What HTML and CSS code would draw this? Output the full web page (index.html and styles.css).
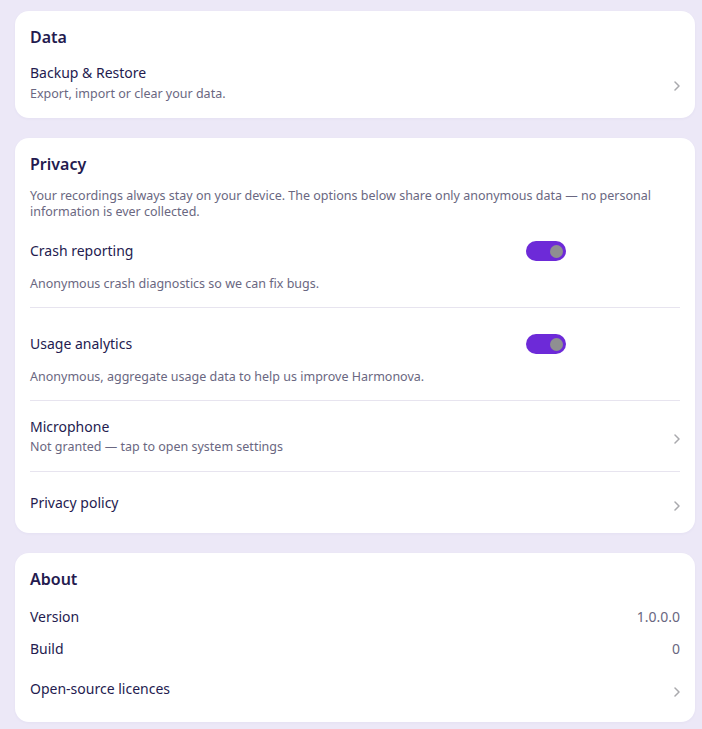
FILE: index.html
```html
<!DOCTYPE html>
<html lang="en">
<head>
<meta charset="utf-8">
<title>Settings</title>
<link rel="stylesheet" href="styles.css">
</head>
<body>
<main class="page">
  <section class="card">
    <h2 class="card-title">Data</h2>
    <div class="nav-item top">
      <div class="text">
        <div class="label">Backup &amp; Restore</div>
        <div class="sub">Export, import or clear your data.</div>
      </div>
      <svg class="chev" width="6" height="10" viewBox="0 0 6 10"><polyline points="1,1 5,5 1,9" fill="none" stroke="#a9a9ad" stroke-width="1.5" stroke-linecap="round" stroke-linejoin="round"/></svg>
    </div>
  </section>

  <section class="card">
    <h2 class="card-title">Privacy</h2>
    <p class="desc">Your recordings always stay on your device. The options below share only anonymous data — no personal information is ever collected.</p>
    <div class="toggle-item first">
      <div class="toggle-row">
        <div class="label">Crash reporting</div>
        <div class="switch"><span class="knob"></span></div>
      </div>
      <div class="sub">Anonymous crash diagnostics so we can fix bugs.</div>
    </div>
    <div class="toggle-item">
      <div class="toggle-row">
        <div class="label">Usage analytics</div>
        <div class="switch"><span class="knob"></span></div>
      </div>
      <div class="sub">Anonymous, aggregate usage data to help us improve Harmonova.</div>
    </div>
    <div class="nav-item divided">
      <div class="text">
        <div class="label">Microphone</div>
        <div class="sub">Not granted — tap to open system settings</div>
      </div>
      <svg class="chev" width="6" height="10" viewBox="0 0 6 10"><polyline points="1,1 5,5 1,9" fill="none" stroke="#a9a9ad" stroke-width="1.5" stroke-linecap="round" stroke-linejoin="round"/></svg>
    </div>
    <div class="nav-item single">
      <div class="text">
        <div class="label">Privacy policy</div>
      </div>
      <svg class="chev" width="6" height="10" viewBox="0 0 6 10"><polyline points="1,1 5,5 1,9" fill="none" stroke="#a9a9ad" stroke-width="1.5" stroke-linecap="round" stroke-linejoin="round"/></svg>
    </div>
  </section>

  <section class="card">
    <h2 class="card-title">About</h2>
    <div class="info-rows">
      <div class="info-row"><span class="label">Version</span><span class="value">1.0.0.0</span></div>
      <div class="info-row"><span class="label">Build</span><span class="value">0</span></div>
    </div>
    <div class="nav-item single last">
      <div class="text">
        <div class="label">Open-source licences</div>
      </div>
      <svg class="chev" width="6" height="10" viewBox="0 0 6 10"><polyline points="1,1 5,5 1,9" fill="none" stroke="#a9a9ad" stroke-width="1.5" stroke-linecap="round" stroke-linejoin="round"/></svg>
    </div>
  </section>
</main>
</body>
</html>
```

FILE: styles.css
```css
* { box-sizing: border-box; }

html, body {
  margin: 0;
  padding: 0;
}

body {
  background: #ece8f7;
  font-family: "Noto Sans", "Open Sans", sans-serif;
  color: #241b4f;
}

.page {
  padding: 11px 7px 0 15px;
}

.card {
  background: #ffffff;
  border-radius: 14px;
  padding: 15px 15px 0;
  margin-bottom: 20px;
  box-shadow: 0 1px 3px rgba(60, 40, 120, 0.04);
}

.card-title {
  margin: 0;
  font-size: 16px;
  font-weight: 600;
  line-height: 22px;
  color: #241b4f;
}

.label {
  font-size: 14px;
  line-height: 20px;
  color: #241b4f;
}

.sub {
  font-size: 12.5px;
  line-height: 19px;
  color: #6a6781;
}

.desc {
  margin: 13px 0 0;
  font-size: 12.5px;
  line-height: 16px;
  color: #6a6781;
}

.nav-item {
  display: flex;
  align-items: center;
  padding: 16px 0 15px;
}

.nav-item.top {
  padding-top: 15px;
}

.nav-item.top .sub {
  margin-top: 1px;
}

.nav-item .text {
  flex: 1;
}

.nav-item.divided {
  border-bottom: 1px solid #e7e4ef;
}

.nav-item.single {
  padding: 21px 0 20px;
}

.nav-item.single.last {
  padding: 14px 0 23px;
}

.chev {
  flex: none;
  margin-top: 5px;
}

.toggle-item {
  padding: 12px 0 14px;
  border-bottom: 1px solid #e7e4ef;
}

.toggle-item.first {
  padding-top: 7px;
}

.toggle-item .sub {
  line-height: 18px;
}

.toggle-row {
  display: flex;
  align-items: center;
  min-height: 48px;
}

.toggle-row .label {
  flex: 1;
}

.switch {
  flex: none;
  width: 40px;
  height: 20px;
  border-radius: 10px;
  background: #6d2ad8;
  margin-right: 114px;
  display: flex;
  align-items: center;
  justify-content: flex-end;
  padding-right: 3px;
}

.knob {
  width: 13px;
  height: 13px;
  border-radius: 50%;
  background: #8f8f91;
}

.info-rows {
  margin-top: 11px;
}

.info-row {
  display: flex;
  justify-content: space-between;
  align-items: center;
  padding: 6px 0;
}

.info-row .value {
  font-size: 14px;
  line-height: 20px;
  color: #6a6781;
}
```
